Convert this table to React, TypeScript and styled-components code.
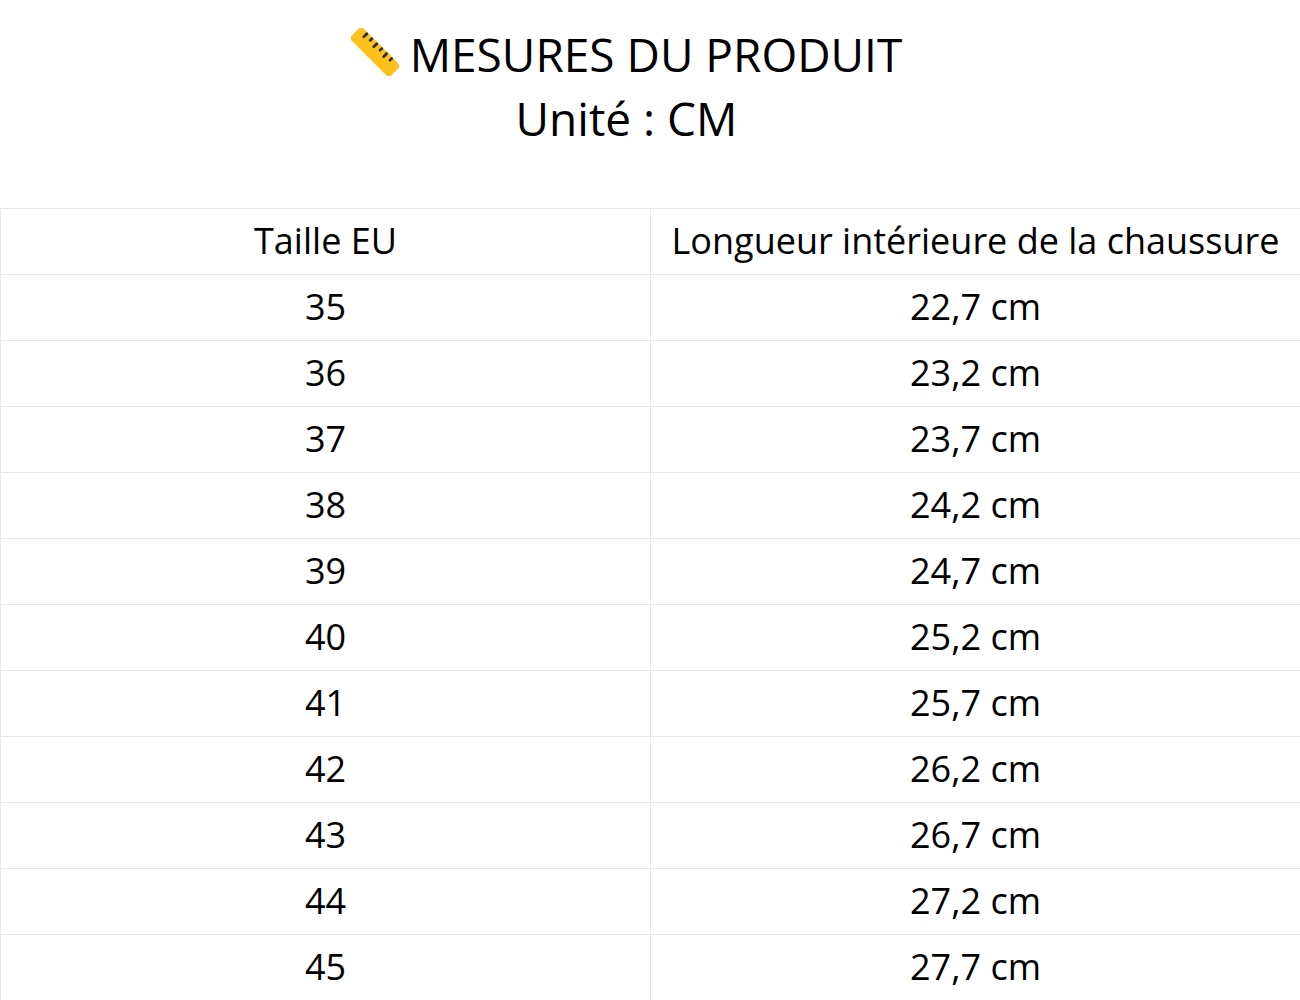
import React from "react";
import styled, { createGlobalStyle } from "styled-components";

const Global = createGlobalStyle`
  html, body { margin: 0; padding: 0; background: #ffffff; }
  body { font-family: "Open Sans", "Noto Sans", sans-serif; color: #000; }
  * { box-sizing: border-box; }
`;

const Page = styled.div`
  width: 1300px;
  height: 1000px;
  overflow: hidden;
  background: #fff;
`;

const Header = styled.header`
  width: 1253px;
  padding-top: 22px;
  display: flex;
  flex-direction: column;
  align-items: center;
  margin-bottom: 58px;
`;

const TitleLine = styled.div`
  font-size: 46px;
  line-height: 64px;
  font-weight: 400;
  display: flex;
  align-items: center;
  gap: 11px;
  white-space: nowrap;
`;

const Grid = styled.div`
  display: grid;
  grid-template-columns: 650px 650px;
  border-top: 1px solid #e6e6e6;
  border-left: 1px solid #e6e6e6;
`;

const Cell = styled.div`
  height: 66px;
  border-right: 1px solid #e6e6e6;
  border-bottom: 1px solid #e6e6e6;
  display: flex;
  align-items: center;
  justify-content: center;
  font-size: 36px;
  line-height: 46px;
  padding-bottom: 2px;
  white-space: nowrap;
`;

const Ruler = () => (
  <svg width="48" height="48" viewBox="0 0 48 48" style={{ marginTop: -4 }}>
    <g transform="rotate(45 24 24)">
      <rect x="-4" y="15.5" width="56" height="17" rx="4" fill="#FCC21B" />
      {[4, 11, 18, 25, 32, 39].map((x, i) => (
        <rect
          key={i}
          x={x}
          y={15.5}
          width="2.8"
          height={i % 2 === 0 ? 7 : 5}
          rx="1.3"
          fill="#2F2F2F"
        />
      ))}
    </g>
  </svg>
);

const rows: [string, string][] = [
  ["35", "22,7 cm"],
  ["36", "23,2 cm"],
  ["37", "23,7 cm"],
  ["38", "24,2 cm"],
  ["39", "24,7 cm"],
  ["40", "25,2 cm"],
  ["41", "25,7 cm"],
  ["42", "26,2 cm"],
  ["43", "26,7 cm"],
  ["44", "27,2 cm"],
  ["45", "27,7 cm"],
];

export default function App() {
  return (
    <Page>
      <Global />
      <Header>
        <TitleLine>
          <Ruler />
          <span>MESURES DU PRODUIT</span>
        </TitleLine>
        <TitleLine>Unité : CM</TitleLine>
      </Header>
      <Grid>
        <Cell>Taille EU</Cell>
        <Cell>Longueur intérieure de la chaussure</Cell>
        {rows.map(([s, l]) => (
          <React.Fragment key={s}>
            <Cell>{s}</Cell>
            <Cell>{l}</Cell>
          </React.Fragment>
        ))}
      </Grid>
    </Page>
  );
}
